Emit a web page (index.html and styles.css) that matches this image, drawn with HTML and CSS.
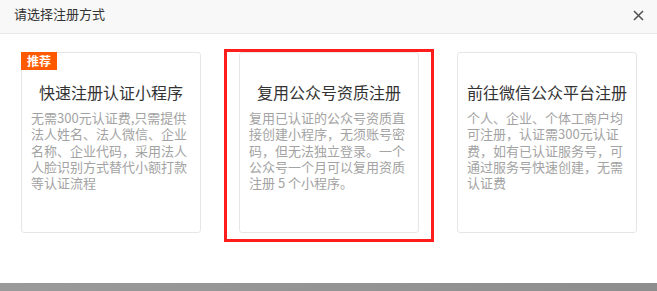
FILE: index.html
```html
<!DOCTYPE html>
<html lang="zh-CN">

<head>
    <meta charset="UTF-8">
    <meta name="viewport" content="width=device-width, initial-scale=1.0">
    <title>请选择注册方式</title>
    <link rel="stylesheet" href="styles.css">
</head>

<body>
    <div class="modal">
        <div class="modal-header">
            <span class="modal-title">请选择注册方式</span>
            <span class="modal-close">
                <svg width="11" height="11" viewBox="0 0 11 11">
                    <path d="M1 1L10 10M10 1L1 10" stroke="#555" stroke-width="1.6" fill="none"/>
                </svg>
            </span>
        </div>

        <div class="modal-body">
            <div class="option">
                <span class="badge">推荐</span>
                <div class="option-title">快速注册认证小程序</div>
                <p class="option-desc">无需300元认证费,只需提供法人姓名、法人微信、企业名称、企业代码，采用法人人脸识别方式替代小额打款等认证流程</p>
            </div>
            <div class="option option-marked">
                <div class="option-title">复用公众号资质注册</div>
                <p class="option-desc">复用已认证的公众号资质直接创建小程序，无须账号密码，但无法独立登录。一个公众号一个月可以复用资质注册 5 个小程序。</p>
            </div>
            <div class="option">
                <div class="option-title">前往微信公众平台注册</div>
                <p class="option-desc">个人、企业、个体工商户均可注册，认证需300元认证费，如有已认证服务号，可通过服务号快速创建，无需认证费</p>
            </div>
        </div>
    </div>
    <div class="backdrop"></div>
</body>

</html>
```

FILE: styles.css
```css
body {
    margin: 0;
    padding: 0;
    background: #fff;
    font-family: "Noto Sans CJK SC", "Noto Sans", sans-serif;
    overflow: hidden;
}

.modal {
    height: 283px;
    background: #fff;
}

.modal-header {
    height: 33px;
    padding: 0 12px 0 14px;
    background: #f8f8f8;
    border-bottom: 1px solid #e8e8e8;
    display: flex;
    justify-content: space-between;
    align-items: flex-start;
}

.modal-title {
    font-size: 13px;
    line-height: 28px;
    color: #333;
}

.modal-close {
    display: flex;
    margin-top: 10px;
    margin-right: 1px;
}

.modal-body {
    display: flex;
    gap: 38px;
    padding: 18px 20px 0 21px;
}

.option {
    position: relative;
    width: 180px;
    height: 181px;
    box-sizing: border-box;
    border: 1px solid #e6e6e6;
    border-radius: 3px;
    padding: 27px 9px 0 9px;
}

.option-marked::after {
    content: "";
    position: absolute;
    top: -4px;
    left: -16px;
    width: 204px;
    height: 187px;
    border: 3px solid #ff1c1c;
}

.badge {
    position: absolute;
    top: -1px;
    left: -1px;
    width: 36px;
    height: 18px;
    background: #ff5a00;
    color: #fff;
    font-size: 12px;
    font-weight: bold;
    line-height: 18px;
    text-align: center;
}

.option-title {
    font-size: 16px;
    line-height: 24px;
    color: #333;
    text-align: center;
    white-space: nowrap;
}

.option-desc {
    margin: 6px 0 0;
    font-size: 13px;
    line-height: 16.25px;
    color: #a3a3a3;
}

.backdrop {
    height: 8px;
    background: linear-gradient(90deg, #9a9a9a, #8e8e8e);
}
```
